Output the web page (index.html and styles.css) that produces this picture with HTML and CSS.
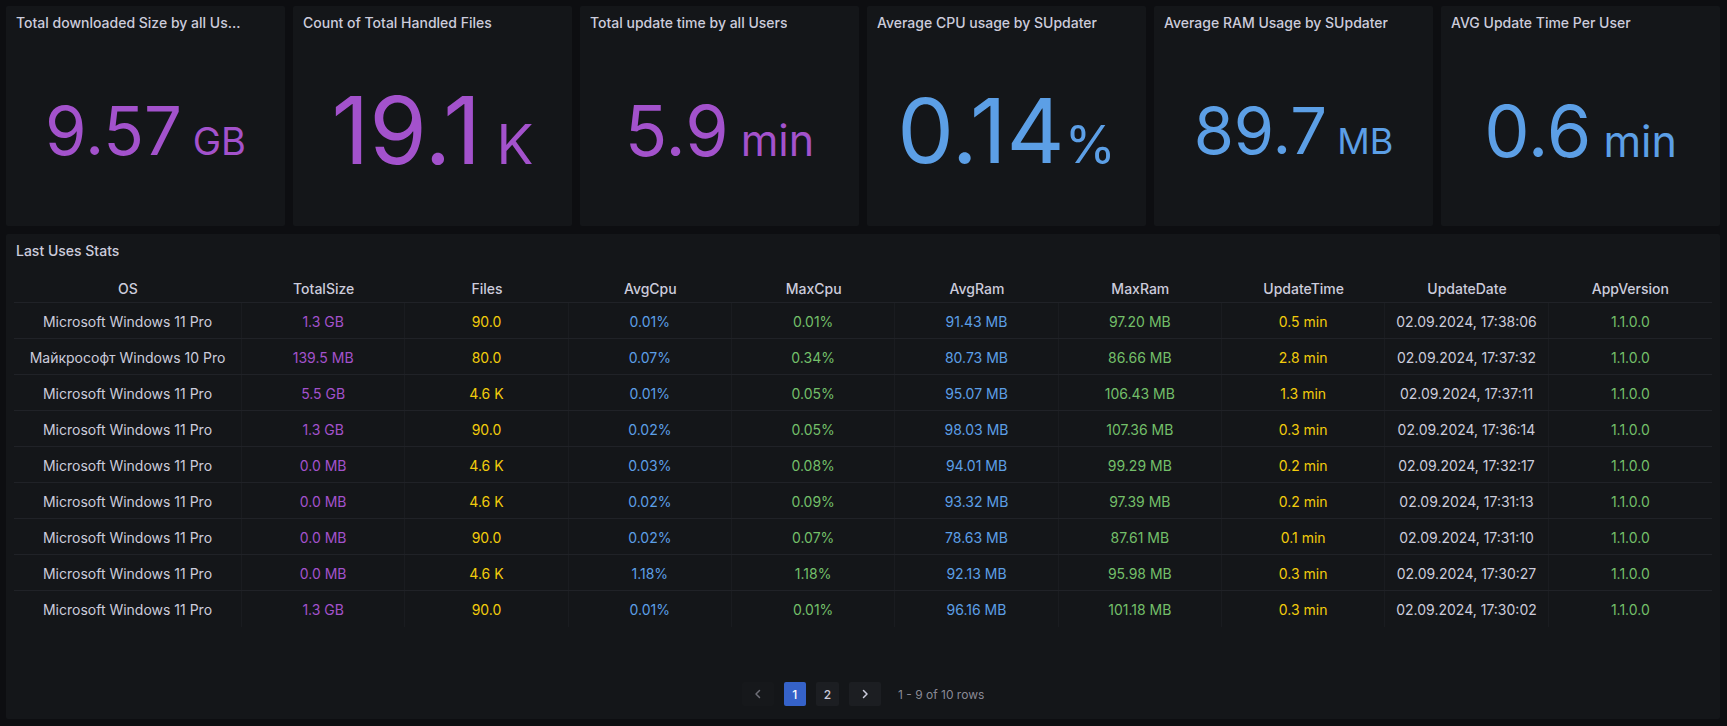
FILE: index.html
```html
<!DOCTYPE html>
<html lang="en">
<head>
<meta charset="utf-8">
<title>SUpdater dashboard</title>
<link rel="stylesheet" href="styles.css">
</head>
<body>
<div class="dashboard">
  <div class="stats-row">
    <section class="panel stat">
      <header class="panel-header"><h2 class="panel-title">Total downloaded Size by all Users</h2></header>
      <div class="stat-body"><div class="big-value purple"><span class="val v67">9.57</span><span class="unit u38">&nbsp;GB</span></div></div>
    </section>
    <section class="panel stat">
      <header class="panel-header"><h2 class="panel-title">Count of Total Handled Files</h2></header>
      <div class="stat-body"><div class="big-value purple"><span class="val v93">19.1</span><span class="unit u55">&nbsp;K</span></div></div>
    </section>
    <section class="panel stat">
      <header class="panel-header"><h2 class="panel-title">Total update time by all Users</h2></header>
      <div class="stat-body"><div class="big-value purple"><span class="val v70">5.9</span><span class="unit u43">&nbsp;min</span></div></div>
    </section>
    <section class="panel stat">
      <header class="panel-header"><h2 class="panel-title">Average CPU usage by SUpdater</h2></header>
      <div class="stat-body"><div class="big-value blue"><span class="val v90">0.14</span><span class="unit u52">%</span></div></div>
    </section>
    <section class="panel stat">
      <header class="panel-header"><h2 class="panel-title">Average RAM Usage by SUpdater</h2></header>
      <div class="stat-body"><div class="big-value blue"><span class="val v65">89.7</span><span class="unit u36">&nbsp;MB</span></div></div>
    </section>
    <section class="panel stat">
      <header class="panel-header"><h2 class="panel-title">AVG Update Time Per User</h2></header>
      <div class="stat-body"><div class="big-value blue"><span class="val v72">0.6</span><span class="unit u43">&nbsp;min</span></div></div>
    </section>
  </div>

  <section class="panel table-panel">
    <header class="panel-header"><h2 class="panel-title">Last Uses Stats</h2></header>
    <div class="table">
      <div class="thead row">
        <div class="th">OS</div><div class="th">TotalSize</div><div class="th">Files</div><div class="th">AvgCpu</div><div class="th">MaxCpu</div><div class="th">AvgRam</div><div class="th">MaxRam</div><div class="th">UpdateTime</div><div class="th">UpdateDate</div><div class="th">AppVersion</div>
      </div>
      <div class="row">
        <div class="td">Microsoft Windows 11 Pro</div><div class="td c-purple">1.3 GB</div><div class="td c-yellow">90.0</div><div class="td c-blue">0.01%</div><div class="td c-green">0.01%</div><div class="td c-blue">91.43 MB</div><div class="td c-green">97.20 MB</div><div class="td c-yellow">0.5 min</div><div class="td">02.09.2024, 17:38:06</div><div class="td c-green">1.1.0.0</div>
      </div>
      <div class="row">
        <div class="td">Майкрософт Windows 10 Pro</div><div class="td c-purple">139.5 MB</div><div class="td c-yellow">80.0</div><div class="td c-blue">0.07%</div><div class="td c-green">0.34%</div><div class="td c-blue">80.73 MB</div><div class="td c-green">86.66 MB</div><div class="td c-yellow">2.8 min</div><div class="td">02.09.2024, 17:37:32</div><div class="td c-green">1.1.0.0</div>
      </div>
      <div class="row">
        <div class="td">Microsoft Windows 11 Pro</div><div class="td c-purple">5.5 GB</div><div class="td c-yellow">4.6 K</div><div class="td c-blue">0.01%</div><div class="td c-green">0.05%</div><div class="td c-blue">95.07 MB</div><div class="td c-green">106.43 MB</div><div class="td c-yellow">1.3 min</div><div class="td">02.09.2024, 17:37:11</div><div class="td c-green">1.1.0.0</div>
      </div>
      <div class="row">
        <div class="td">Microsoft Windows 11 Pro</div><div class="td c-purple">1.3 GB</div><div class="td c-yellow">90.0</div><div class="td c-blue">0.02%</div><div class="td c-green">0.05%</div><div class="td c-blue">98.03 MB</div><div class="td c-green">107.36 MB</div><div class="td c-yellow">0.3 min</div><div class="td">02.09.2024, 17:36:14</div><div class="td c-green">1.1.0.0</div>
      </div>
      <div class="row">
        <div class="td">Microsoft Windows 11 Pro</div><div class="td c-purple">0.0 MB</div><div class="td c-yellow">4.6 K</div><div class="td c-blue">0.03%</div><div class="td c-green">0.08%</div><div class="td c-blue">94.01 MB</div><div class="td c-green">99.29 MB</div><div class="td c-yellow">0.2 min</div><div class="td">02.09.2024, 17:32:17</div><div class="td c-green">1.1.0.0</div>
      </div>
      <div class="row">
        <div class="td">Microsoft Windows 11 Pro</div><div class="td c-purple">0.0 MB</div><div class="td c-yellow">4.6 K</div><div class="td c-blue">0.02%</div><div class="td c-green">0.09%</div><div class="td c-blue">93.32 MB</div><div class="td c-green">97.39 MB</div><div class="td c-yellow">0.2 min</div><div class="td">02.09.2024, 17:31:13</div><div class="td c-green">1.1.0.0</div>
      </div>
      <div class="row">
        <div class="td">Microsoft Windows 11 Pro</div><div class="td c-purple">0.0 MB</div><div class="td c-yellow">90.0</div><div class="td c-blue">0.02%</div><div class="td c-green">0.07%</div><div class="td c-blue">78.63 MB</div><div class="td c-green">87.61 MB</div><div class="td c-yellow">0.1 min</div><div class="td">02.09.2024, 17:31:10</div><div class="td c-green">1.1.0.0</div>
      </div>
      <div class="row">
        <div class="td">Microsoft Windows 11 Pro</div><div class="td c-purple">0.0 MB</div><div class="td c-yellow">4.6 K</div><div class="td c-blue">1.18%</div><div class="td c-green">1.18%</div><div class="td c-blue">92.13 MB</div><div class="td c-green">95.98 MB</div><div class="td c-yellow">0.3 min</div><div class="td">02.09.2024, 17:30:27</div><div class="td c-green">1.1.0.0</div>
      </div>
      <div class="row last">
        <div class="td">Microsoft Windows 11 Pro</div><div class="td c-purple">1.3 GB</div><div class="td c-yellow">90.0</div><div class="td c-blue">0.01%</div><div class="td c-green">0.01%</div><div class="td c-blue">96.16 MB</div><div class="td c-green">101.18 MB</div><div class="td c-yellow">0.3 min</div><div class="td">02.09.2024, 17:30:02</div><div class="td c-green">1.1.0.0</div>
      </div>
    </div>
    <nav class="pagination">
      <button class="pg-btn pg-arrow disabled" aria-label="previous"><svg width="16" height="16" viewBox="0 0 16 16"><path d="M9.5 4.5 L6 8 L9.5 11.5" fill="none" stroke="currentColor" stroke-width="1.5" stroke-linecap="round" stroke-linejoin="round"/></svg></button>
      <button class="pg-btn pg-num active">1</button>
      <button class="pg-btn pg-num">2</button>
      <button class="pg-btn pg-arrow" aria-label="next"><svg width="16" height="16" viewBox="0 0 16 16"><path d="M6.5 4.5 L10 8 L6.5 11.5" fill="none" stroke="currentColor" stroke-width="1.5" stroke-linecap="round" stroke-linejoin="round"/></svg></button>
      <span class="pg-summary">1 - 9 of 10 rows</span>
    </nav>
  </section>
</div>
</body>
</html>
```
FILE: styles.css
```css
* { box-sizing: border-box; }
html, body {
  margin: 0;
  padding: 0;
  background: #0d0e11;
}
body {
  font-family: Inter, "Noto Sans", "DejaVu Sans", sans-serif;
  color: #ccccdc;
  font-size: 14px;
}
.dashboard {
  width: 1727px;
  height: 726px;
  padding: 6px 7px 7px 6px;
  display: flex;
  flex-direction: column;
  gap: 8px;
}
.stats-row {
  display: grid;
  grid-template-columns: repeat(6, 1fr);
  gap: 8px;
  height: 220px;
}
.panel {
  background: #141619;
  border-radius: 2px;
  display: flex;
  flex-direction: column;
  min-width: 0;
}
.panel-header {
  height: 34px;
  padding: 0 10px;
  display: flex;
  align-items: center;
  flex: none;
}
.panel-title {
  margin: 0;
  max-width: 232.7px;
  font-size: 14px;
  font-weight: 500;
  line-height: 20px;
  color: #ccccdc;
  white-space: nowrap;
  overflow: hidden;
  text-overflow: ellipsis;
  min-width: 0;
}
.table-panel .panel-title { max-width: none; }
.stat-body {
  flex: 1;
  display: flex;
  align-items: center;
  justify-content: center;
  padding-bottom: 5px;
}
.big-value {
  display: flex;
  align-items: baseline;
  white-space: nowrap;
  line-height: 1;
  font-weight: 400;
}
.purple { color: #a352cc; }
.blue { color: #5c9fe6; }
.v67 { font-size: 67px; }
.v93 { font-size: 93px; }
.v70 { font-size: 70px; }
.v90 { font-size: 90px; }
.v65 { font-size: 65px; }
.v72 { font-size: 72px; }
.u38 { font-size: 38px; }
.u55 { font-size: 55px; }
.u43 { font-size: 43px; }
.u52 { font-size: 52px; }
.u36 { font-size: 36px; }

.table-panel {
  flex: 1;
  padding-bottom: 13px;
}
.table {
  flex: 1;
  margin: 0 8px;
}
.row {
  display: grid;
  grid-template-columns: 228px repeat(9, 1fr);
  height: 36px;
  border-bottom: 1px solid rgba(204, 204, 220, 0.07);
}
.row.last { border-bottom: none; }
.thead {
  height: 35px;
}
.th {
  display: flex;
  align-items: flex-end;
  justify-content: center;
  padding-bottom: 3px;
  font-weight: 500;
  line-height: 21px;
  white-space: nowrap;
}
.td {
  display: flex;
  align-items: center;
  justify-content: center;
  white-space: nowrap;
  line-height: 21px;
  padding-top: 1px;
  border-right: 1px solid rgba(204, 204, 220, 0.035);
}
.td:last-child { border-right: none; }
.c-purple { color: #a352cc; }
.c-yellow { color: #f2cc0c; }
.c-blue { color: #5c9fe6; }
.c-green { color: #73bf69; }

.pagination {
  display: flex;
  justify-content: center;
  align-items: center;
  gap: 10px;
  height: 24px;
}
.pg-btn {
  height: 24px;
  border: none;
  border-radius: 2px;
  font-family: inherit;
  font-size: 12px;
  font-weight: 500;
  color: #ccccdc;
  display: flex;
  align-items: center;
  justify-content: center;
  padding: 0 8px;
  background: #1c1e22;
}
.pg-num { min-width: 22px; }
.pg-arrow { width: 32px; }
.pg-btn.active { background: #3562c9; color: #ffffff; }
.pg-btn.disabled { background: #16181b; color: #6e6f78; }
.pg-summary {
  margin-left: 7px;
  font-size: 12px;
  color: rgba(204, 204, 220, 0.65);
}
```
